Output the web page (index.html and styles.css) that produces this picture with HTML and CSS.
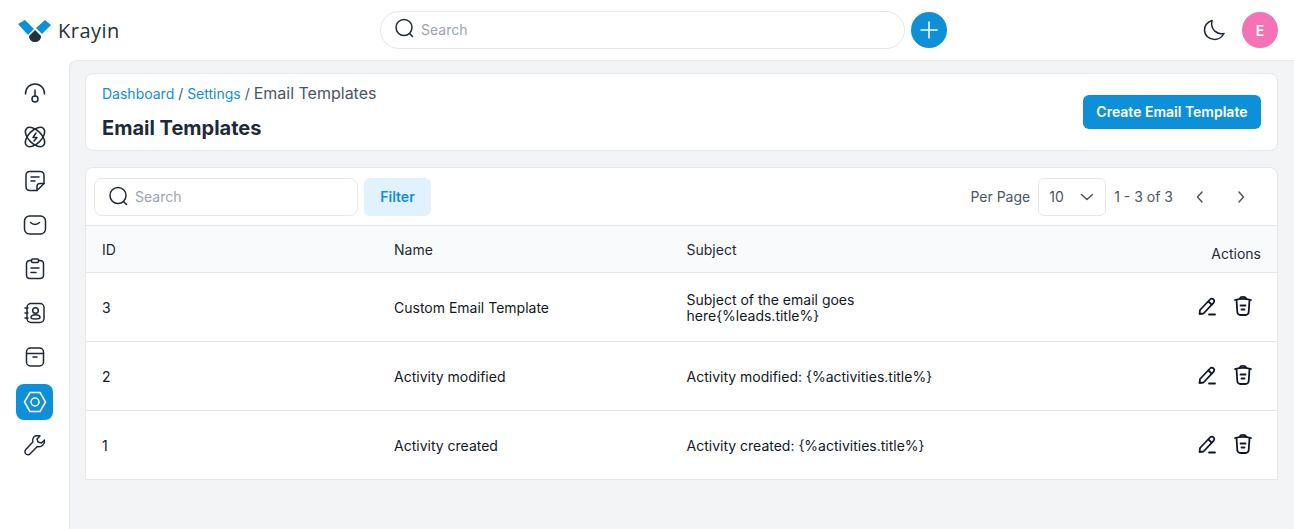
FILE: index.html
```html
<!DOCTYPE html>
<html lang="en">
<head>
  <meta charset="UTF-8" />
  <title>Email Templates</title>
  <link rel="stylesheet" href="styles.css">
</head>
<body>
  <header class="topbar">
    <div class="brand">
      <svg class="brand-mark" width="34" height="24" viewBox="0 0 34 24">
        <path d="M0 6 L7 2 L16 11 L10 17 Z" fill="#0e90d9"/>
        <path d="M18 10 L27 2 L33 7 L24 16 Z" fill="#0e90d9"/>
        <path d="M17 12 L11 18 C11 22 14 24 17 24 C20 24 23 22 23 18 Z" fill="#263238"/>
      </svg>
      <span class="brand-name">Krayin</span>
    </div>
    <div class="top-search">
      <div class="search-pill">
        <svg class="icon" width="24" height="24" viewBox="0 0 24 24"><circle cx="11" cy="10.500" r="8"/><path d="M16.500 16.500 L19.500 19.500"/></svg>
        <span class="placeholder">Search</span>
      </div>
      <button class="quick-add">
        <svg width="24" height="24" viewBox="0 0 24 24"><path d="M12 3.500 V20.500 M3.500 12 H20.500" stroke="#fff" stroke-width="1.500" fill="none"/></svg>
      </button>
    </div>
    <div class="top-right">
      <svg class="icon" width="26" height="26" viewBox="0 0 26 26"><path d="M11 3.500 C7 5 3.500 8.500 3.500 13 C3.500 18.500 8 22.500 13.500 22.500 C17.500 22.500 21 20 23 16.500 C16.500 18 9 13 11 3.500 Z"/></svg>
      <div class="avatar">E</div>
    </div>
  </header>

  <div class="shell">
    <nav class="sidebar">
      <a class="nav-item"><svg class="icon" width="24" height="24" viewBox="0 0 24 24"><path d="M2.500 13 C2.500 7 6.500 3 12 3 C17.500 3 21.500 7 21.500 13"/><path d="M12 9 V15"/><circle cx="12" cy="18" r="3"/></svg></a>
      <a class="nav-item"><svg class="icon" width="24" height="24" viewBox="0 0 24 24"><ellipse cx="12" cy="12" rx="12" ry="6.500" transform="rotate(45 12 12)"/><ellipse cx="12" cy="12" rx="12" ry="6.500" transform="rotate(-45 12 12)"/><path d="M13 8 L10 12.500 H14 L11 16"/></svg></a>
      <a class="nav-item"><svg class="icon" width="24" height="24" viewBox="0 0 24 24"><path d="M14 21.500 H7 C4.500 21.500 3 20 3 17.500 V6.500 C3 4 4.500 2.500 7 2.500 H17 C19.500 2.500 21 4 21 6.500 V14.500 Z"/><path d="M14 21.500 V17.500 C14 15.500 15 14.500 17 14.500 H21"/><path d="M8 8 H16 M8 12 H12"/></svg></a>
      <a class="nav-item"><svg class="icon" width="24" height="24" viewBox="0 0 24 24"><rect x="1.500" y="3" width="21" height="18" rx="5"/><path d="M7.500 9.500 C10 12 14 12 16.500 9.500"/></svg></a>
      <a class="nav-item"><svg class="icon" width="24" height="24" viewBox="0 0 24 24"><path d="M8.500 3.500 H7 C4.500 3.500 3.500 5 3.500 7 V18 C3.500 20.500 5 21.500 7 21.500 H17 C19.500 21.500 20.500 20 20.500 18 V7 C20.500 5 19.500 3.500 17 3.500 H15.500"/><rect x="8.500" y="2" width="7" height="3.500" rx="1"/><path d="M8 11 H16 M8 15.500 H13"/></svg></a>
      <a class="nav-item"><svg class="icon" width="24" height="24" viewBox="0 0 24 24"><rect x="4" y="2.500" width="17" height="19" rx="4"/><circle cx="12.500" cy="9.500" r="2.800"/><path d="M8 16.500 C8 14.500 10 13.700 12.500 13.700 C15 13.700 17 14.500 17 16.500 C17 18 15 18 12.500 18 C10 18 8 18 8 16.500 Z"/><path d="M2 7 H5 M2 12 H5 M2 17 H5"/></svg></a>
      <a class="nav-item"><svg class="icon" width="24" height="24" viewBox="0 0 24 24"><rect x="3.500" y="3" width="17" height="18" rx="4"/><path d="M3.500 8.500 H20.500 M10 12 H14"/></svg></a>
      <a class="nav-item active"><svg class="icon" width="24" height="24" viewBox="0 0 24 24"><path d="M7 2.500 H17 L22.500 12 L17 21.500 H7 L1.500 12 Z"/><circle cx="12" cy="12" r="4"/></svg></a>
      <a class="nav-item"><svg class="icon" width="24" height="24" viewBox="0 0 24 24"><path d="M14.500 2.500 C11 2.500 9 5.500 9.800 9 L2.800 16.500 C1.500 18 1.800 20 3 21 C4.300 22 6 22 7.200 20.800 L14.300 13.500 C18.500 14.500 22 11.500 21.500 7 L18.500 10 L15 9 L14 6 L17 3 C16 2.600 15.300 2.500 14.500 2.500 Z"/></svg></a>
    </nav>

    <main class="content">
      <section class="card page-head">
        <div>
          <div class="crumbs"><a>Dashboard</a> / <a>Settings</a> / <span>Email Templates</span></div>
          <h1>Email Templates</h1>
        </div>
        <button class="btn-primary">Create Email Template</button>
      </section>

      <section class="card grid-card">
        <div class="toolbar">
          <div class="toolbar-left">
            <div class="search-box">
              <svg class="icon" width="24" height="24" viewBox="0 0 24 24"><circle cx="11" cy="10.500" r="8"/><path d="M16.500 16.500 L19.500 19.500"/></svg>
              <span class="placeholder">Search</span>
            </div>
            <button class="btn-filter">Filter</button>
          </div>
          <div class="toolbar-right">
            <span>Per Page</span>
            <div class="per-page">
              <span>10</span>
              <svg class="pager-icon" width="16" height="16" viewBox="0 0 16 16"><path d="M2.500 5.500 L8 10.500 L13.500 5.500"/></svg>
            </div>
            <span class="page-range">1 - 3 of 3</span>
            <svg class="pager-icon arrow" width="24" height="24" viewBox="0 0 24 24"><path d="M14 7 L9.500 12 L14 17"/></svg>
            <svg class="pager-icon arrow" width="24" height="24" viewBox="0 0 24 24"><path d="M10 7 L14.500 12 L10 17"/></svg>
          </div>
        </div>

        <div class="row row-head">
          <div>ID</div>
          <div>Name</div>
          <div>Subject</div>
          <div class="actions-label">Actions</div>
        </div>
        <div class="row">
          <div>3</div>
          <div>Custom Email Template</div>
          <div class="subject">Subject of the email goes here{%leads.title%}</div>
          <div class="actions">
            <svg class="action-icon" width="24" height="24" viewBox="0 0 24 24"><path d="M4.500 20 L5 16 L15 5.500 C16 4.400 17.500 4.400 18.500 5.400 C19.500 6.400 19.500 7.800 18.500 8.800 L8.500 19.500 Z"/><path d="M13.500 7.500 L16.500 10.500 M14 20.500 H20"/></svg>
            <svg class="action-icon" width="24" height="24" viewBox="0 0 24 24"><path d="M4 6 C9 4.500 15 4.500 20 6 M9 4.800 C9 3.300 10 2.800 12 2.800 C14 2.800 15 3.300 15 4.800"/><path d="M5.500 6 L6.300 18 C6.500 20 7.500 21 9.500 21 H14.500 C16.500 21 17.500 20 17.700 18 L18.500 6"/><path d="M9.500 11.500 H14.500 M10.500 15.500 H13.500"/></svg>
          </div>
        </div>
        <div class="row">
          <div>2</div>
          <div>Activity modified</div>
          <div class="subject">Activity modified: {%activities.title%}</div>
          <div class="actions">
            <svg class="action-icon" width="24" height="24" viewBox="0 0 24 24"><path d="M4.500 20 L5 16 L15 5.500 C16 4.400 17.500 4.400 18.500 5.400 C19.500 6.400 19.500 7.800 18.500 8.800 L8.500 19.500 Z"/><path d="M13.500 7.500 L16.500 10.500 M14 20.500 H20"/></svg>
            <svg class="action-icon" width="24" height="24" viewBox="0 0 24 24"><path d="M4 6 C9 4.500 15 4.500 20 6 M9 4.800 C9 3.300 10 2.800 12 2.800 C14 2.800 15 3.300 15 4.800"/><path d="M5.500 6 L6.300 18 C6.500 20 7.500 21 9.500 21 H14.500 C16.500 21 17.500 20 17.700 18 L18.500 6"/><path d="M9.500 11.500 H14.500 M10.500 15.500 H13.500"/></svg>
          </div>
        </div>
        <div class="row">
          <div>1</div>
          <div>Activity created</div>
          <div class="subject">Activity created: {%activities.title%}</div>
          <div class="actions">
            <svg class="action-icon" width="24" height="24" viewBox="0 0 24 24"><path d="M4.500 20 L5 16 L15 5.500 C16 4.400 17.500 4.400 18.500 5.400 C19.500 6.400 19.500 7.800 18.500 8.800 L8.500 19.500 Z"/><path d="M13.500 7.500 L16.500 10.500 M14 20.500 H20"/></svg>
            <svg class="action-icon" width="24" height="24" viewBox="0 0 24 24"><path d="M4 6 C9 4.500 15 4.500 20 6 M9 4.800 C9 3.300 10 2.800 12 2.800 C14 2.800 15 3.300 15 4.800"/><path d="M5.500 6 L6.300 18 C6.500 20 7.500 21 9.500 21 H14.500 C16.500 21 17.500 20 17.700 18 L18.500 6"/><path d="M9.500 11.500 H14.500 M10.500 15.500 H13.500"/></svg>
          </div>
        </div>
      </section>
    </main>
  </div>
</body>
</html>
```

FILE: styles.css
```css
* {
  box-sizing: border-box;
}
html, body {
  height: 100%;
}
body {
  margin: 0;
  font-family: Inter, "Liberation Sans", sans-serif;
  font-size: 14px;
  color: #111827;
  background: #fff;
  overflow: hidden;
}
svg {
  display: block;
  flex: none;
}
.icon {
  fill: none;
  stroke: #1f2937;
  stroke-width: 1.5;
  stroke-linecap: round;
  stroke-linejoin: round;
}
.topbar {
  height: 60px;
  display: flex;
  align-items: center;
  background: #fff;
}
.brand {
  width: 380px;
  padding-left: 18px;
  display: flex;
  align-items: center;
  gap: 6px;
}
.brand-name {
  font-family: "Open Sans", sans-serif;
  font-size: 20px;
  letter-spacing: 0.5px;
  font-weight: 500;
  color: #263238;
}
.top-search {
  display: flex;
  align-items: center;
  gap: 6px;
}
.search-pill {
  width: 525px;
  height: 38px;
  border: 1px solid #e5e7eb;
  border-radius: 19px;
  padding: 0 12px 2px;
  display: flex;
  align-items: center;
  gap: 4px;
}
.placeholder {
  color: #9ca3af;
}
.quick-add {
  width: 36px;
  height: 36px;
  border: none;
  border-radius: 50%;
  background: #0e90d9;
  padding: 6px;
}
.top-right {
  margin-left: auto;
  padding-right: 16px;
  display: flex;
  align-items: center;
  gap: 15px;
}
.avatar {
  width: 36px;
  height: 36px;
  border-radius: 50%;
  background: #f472b6;
  color: #fff;
  font-weight: 600;
  display: flex;
  align-items: center;
  justify-content: center;
}
.shell {
  display: flex;
  height: 469px;
}
.sidebar {
  width: 69px;
  padding-top: 16px;
  padding-left: 16px;
  display: flex;
  flex-direction: column;
  gap: 8px;
  background: #fff;
}
.nav-item {
  width: 37px;
  height: 36px;
  padding-bottom: 2px;
  border-radius: 8px;
  display: flex;
  align-items: center;
  justify-content: center;
}
.nav-item.active {
  padding-bottom: 0;
  background: #0e90d9;
}
.nav-item.active .icon {
  stroke: #fff;
}
.content {
  flex: 1;
  padding: 12px 16px 0 15px;
  background: #f3f4f6;
  border-top-left-radius: 8px;
  border-left: 1px solid #e5e7eb;
  border-top: 1px solid #e5e7eb;
}
.card {
  background: #fff;
  border: 1px solid #e5e7eb;
  border-radius: 8px;
}
.page-head {
  height: 78px;
  padding: 0 16px;
  display: flex;
  align-items: center;
  justify-content: space-between;
  margin-bottom: 16px;
}
.page-head > div {
  padding-top: 1px;
}
.crumbs {
  font-size: 14px;
  line-height: 20px;
  color: #4b5563;
}
.crumbs a {
  color: #0e90d9;
}
.crumbs span {
  font-size: 16px;
}
h1 {
  margin: 10px 0 0;
  font-size: 20px;
  line-height: 28px;
  font-weight: 700;
  color: #1f2937;
}
.btn-primary {
  height: 34px;
  padding: 0 13.500px 2px;
  border: none;
  border-radius: 6px;
  background: #0e90d9;
  color: #fff;
  font-family: inherit;
  font-size: 14px;
  font-weight: 600;
}
.grid-card {
  height: 313px;
  overflow: hidden;
  border-radius: 8px 8px 0 0;
}
.toolbar {
  height: 58px;
  padding: 0 16px 0 8px;
  display: flex;
  align-items: center;
  justify-content: space-between;
  border-bottom: 1px solid #e5e7eb;
}
.toolbar-left {
  display: flex;
  align-items: center;
  gap: 6px;
}
.search-box {
  width: 264px;
  height: 38px;
  border: 1px solid #e5e7eb;
  border-radius: 8px;
  padding-left: 12px;
  display: flex;
  align-items: center;
  gap: 4px;
}
.btn-filter {
  width: 67px;
  height: 38px;
  border: none;
  border-radius: 6px;
  background: #e0f2fe;
  color: #0e90d9;
  font-family: inherit;
  font-size: 14px;
  font-weight: 600;
}
.toolbar-right {
  display: flex;
  align-items: center;
  gap: 8px;
  color: #4b5563;
}
.page-range {
  margin-right: 6px;
}
.per-page {
  width: 68px;
  height: 38px;
  border: 1px solid #e5e7eb;
  border-radius: 6px;
  padding: 0 10px;
  display: flex;
  align-items: center;
  justify-content: space-between;
}
.pager-icon {
  fill: none;
  stroke: #4b5563;
  stroke-width: 1.5;
  stroke-linecap: round;
  stroke-linejoin: round;
}
.arrow {
  margin-left: 1px;
  margin-right: 8px;
}
.row {
  height: 69px;
  padding: 2px 16px 0;
  display: grid;
  grid-template-columns: 292px 292.500px 292px 1fr;
  align-items: center;
  border-bottom: 1px solid #e5e7eb;
  line-height: 16px;
}
.row-head {
  height: 47px;
  background: #f9fafb;
  color: #1f2937;
}
.actions-label {
  text-align: right;
  padding-top: 8px;
}
.subject {
  max-width: 260px;
}
.actions {
  display: flex;
  justify-content: flex-end;
  gap: 12px;
  padding-right: 6px;
  margin-top: -4px;
}
.action-icon {
  fill: none;
  stroke: #111827;
  stroke-width: 1.800;
  stroke-linecap: round;
  stroke-linejoin: round;
}
```
